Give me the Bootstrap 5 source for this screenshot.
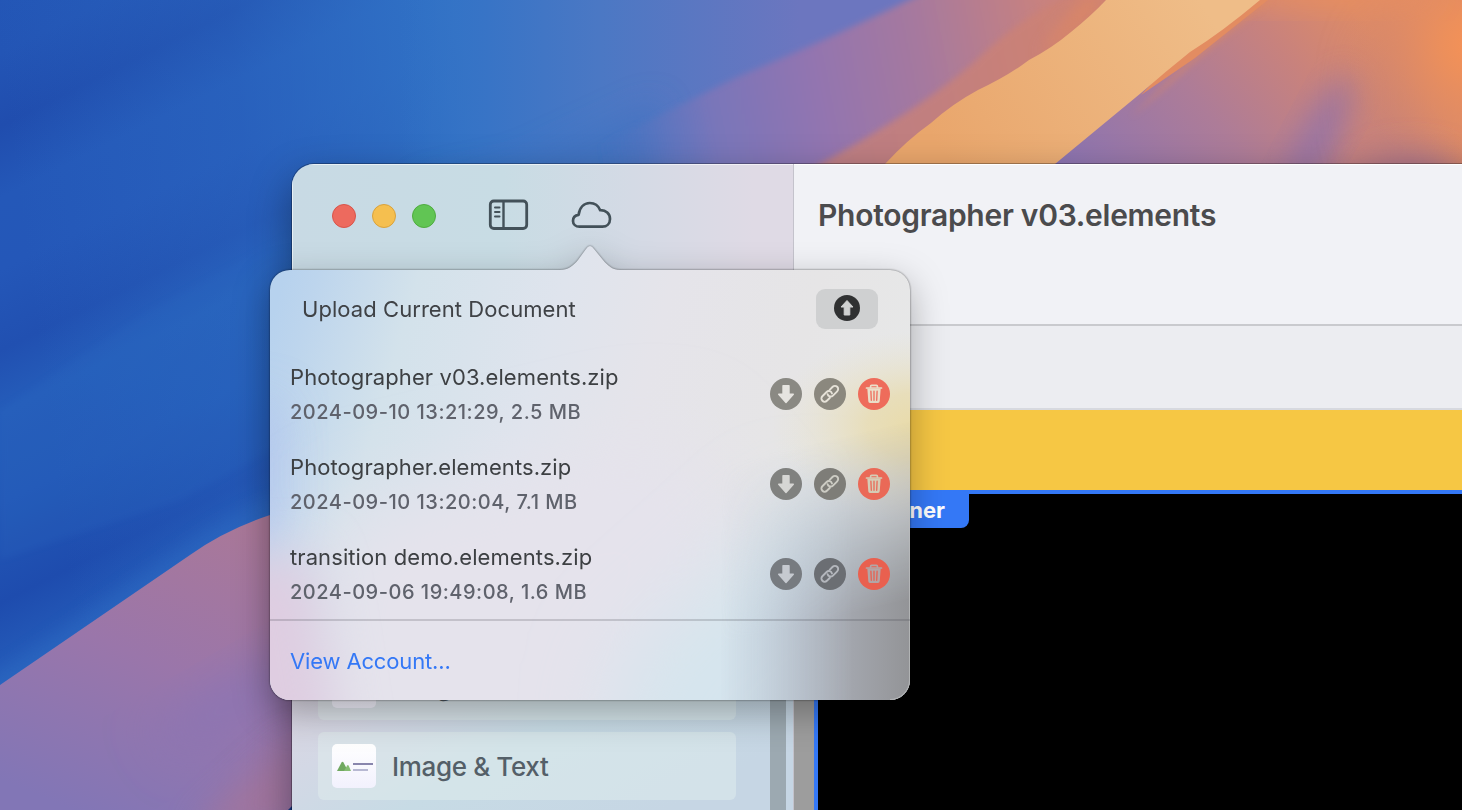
<!DOCTYPE html>
<html lang="en">
<head>
<meta charset="utf-8">
<title>Elements Cloud</title>
<link href="https://cdn.jsdelivr.net/npm/bootstrap@5.3.0/dist/css/bootstrap.min.css" rel="stylesheet">
<style>
  body { font-family: Inter, "Liberation Sans", sans-serif; background: #2a61bc; }
  .desktop { width: 1462px; height: 810px; padding: 164px 0 0 292px; }
  .wallpaper { inset: 0; }
  .app-window { width: 1250px; height: 720px; border-radius: 22px 0 0 0; box-shadow: 0 0 0 1px rgba(0,0,0,.28), 0 16px 42px rgba(0,0,0,.4); overflow: hidden; }
  .sidebar { width: 502px; background: linear-gradient(90deg, #c8dae4 0, #c8dce4 42%, #d4dae5 68%, #dfdae5 92%); border-right: 1px solid #c4c3cc; box-shadow: inset 1px 1px 0 rgba(255,255,255,.6); }
  .toolbar-left { height: 106px; padding: 36px 0 0 39.5px; }
  .light-dot { width: 24px; height: 24px; border-radius: 50%; }
  .dot-r { background: #ed6a5e; border: 1px solid #d8544a; }
  .dot-y { background: #f5bf4f; border: 1px solid #d9a23c; }
  .dot-g { background: #61c554; border: 1px solid #4fac3f; }
  .sb-icon { margin-left: 52px; margin-top: -1px; }
  .cloud-icon { margin-left: 41px; margin-top: 1px; }
  .side-body { height: 614px; padding-top: 382px; background: linear-gradient(150deg, #dfd4e0 0, #dfd4e0 42%, #d3d8e5 56%, #c7dbe5 67%, #c6d6e4 84%); }
  .comp-list { width: 418px; margin-left: 26px; gap: 12px; }
  .comp-item { height: 68px; border-radius: 6px; background: rgba(225,238,238,.48); padding-left: 14px; gap: 16px; font-size: 26px; color: #545f68; letter-spacing: -.35px; font-weight: 500; }
  .comp-thumb { width: 44px; height: 44px; border-radius: 5px; background: linear-gradient(#fff, #f2f1fd); }
  .track { width: 16px; margin-right: 7px; background: #9ca9b1; }
  .doc-head { height: 160px; background: #f1f2f6; padding: 29px 0 0 24px; box-shadow: inset 0 1px 0 #fff; }
  .doc-title { font-size: 30px; font-weight: 600; color: #4b4b4d; line-height: 44px; letter-spacing: -.28px; }
  .doc-bar { height: 86px; background: #ecedf1; border-top: 2px solid #c9cace; border-bottom: 2px solid #d7d9df; }
  .doc-yellow { height: 80px; background: #f6c744; }
  .doc-body { background: #9d9d9d; padding-left: 20px; }
  .sel-wrap { margin-left: -20px; border-top: 4px solid #3478f6; padding-left: 20px; }
  .sel-inner { border-left: 4px solid #3478f6; background: #000; height: 400px; }
  .tag-name { height: 34px; width: 151px; background: #3478f6; color: #fff; font-weight: 700; font-size: 22px; border-bottom-right-radius: 8px; padding-right: 24px; line-height: 33px; }
  .pop { left: 270px; top: 244px; width: 640px; height: 456px; filter: drop-shadow(0 0 1px rgba(0,0,0,.55)) drop-shadow(0 12px 18px rgba(0,0,0,.3)); }
  .pop-art { inset: 0; }
  .pop-content { padding-top: 26px; }
  .upload-row { height: 78px; padding: 0 32px; color: #3f4246; font-size: 22px; letter-spacing: .06px; }
  .upload-btn { width: 62px; height: 40px; border-radius: 9px; background: #cfd0d1; }
  .files { padding: 0 20px; }
  .file-row { height: 90px; padding-top: 14px; }
  .file-name { font-size: 22px; line-height: 30px; color: #3d4043; letter-spacing: .09px; }
  .file-meta { font-size: 20px; line-height: 28px; margin-top: 6px; color: #5f626c; font-weight: 500; letter-spacing: .51px; }
  .actions { gap: 12px; padding-top: 16px; }
  .account { height: 81px; margin-top: 1px; border-top: 2px solid rgba(60,60,70,.2); padding: 2px 20px 0; }
  .account a { color: #3478f6; font-size: 22px; letter-spacing: -.15px; }
</style>
</head>
<body class="overflow-hidden m-0">
<main class="desktop position-relative overflow-hidden">
  <svg class="wallpaper position-absolute" width="1462" height="810" viewBox="0 0 1462 810" aria-hidden="true">
    <defs>
      <linearGradient id="gBlue" x1="0" y1="0" x2="360" y2="720" gradientUnits="userSpaceOnUse">
        <stop offset="0" stop-color="#2356b6"/><stop offset=".06" stop-color="#2355b5"/><stop offset=".14" stop-color="#204dae"/><stop offset=".22" stop-color="#2458b8"/><stop offset=".3" stop-color="#2457b8"/><stop offset=".39" stop-color="#2150b1"/><stop offset=".46" stop-color="#255dba"/><stop offset=".56" stop-color="#2358b7"/><stop offset=".67" stop-color="#1e4cae"/><stop offset=".74" stop-color="#245ab8"/><stop offset=".8" stop-color="#2a68c0"/><stop offset="1" stop-color="#2a68c0"/>
      </linearGradient>
      <linearGradient id="gLift" x1="0" y1="60" x2="460" y2="0" gradientUnits="userSpaceOnUse"><stop offset="0" stop-color="#3376c8" stop-opacity="0"/><stop offset=".5" stop-color="#3376c8" stop-opacity=".3"/><stop offset="1" stop-color="#3376c8" stop-opacity=".9"/></linearGradient>
      <linearGradient id="gBand" x1="1200" y1="0" x2="950" y2="164" gradientUnits="userSpaceOnUse"><stop offset="0" stop-color="#efbd88"/><stop offset="1" stop-color="#e9a66c"/></linearGradient>
      <linearGradient id="gRose" x1="250" y1="520" x2="120" y2="830" gradientUnits="userSpaceOnUse"><stop offset="0" stop-color="#aa7898"/><stop offset=".5" stop-color="#9a76aa"/><stop offset="1" stop-color="#8276b6"/></linearGradient>
      <linearGradient id="gPurple" x1="590" y1="110" x2="1050" y2="20" gradientUnits="userSpaceOnUse"><stop offset="0" stop-color="#4a73c2" stop-opacity="0"/><stop offset=".25" stop-color="#7876ba"/><stop offset=".48" stop-color="#9275b0"/><stop offset=".72" stop-color="#a6799e"/><stop offset="1" stop-color="#c9827e"/></linearGradient>
      <linearGradient id="gTop" x1="400" y1="0" x2="800" y2="0" gradientUnits="userSpaceOnUse"><stop offset="0" stop-color="#3273c6" stop-opacity="0"/><stop offset=".22" stop-color="#3874c6"/><stop offset=".5" stop-color="#4b78c4"/><stop offset="1" stop-color="#6c76bf"/></linearGradient>
      <linearGradient id="gRight" x1="1080" y1="190" x2="1330" y2="-20" gradientUnits="userSpaceOnUse"><stop offset="0" stop-color="#8b74b2"/><stop offset=".45" stop-color="#ad7c98"/><stop offset=".75" stop-color="#c8827d"/><stop offset="1" stop-color="#de8b66"/></linearGradient>
      <radialGradient id="gGlow" cx="1475" cy="45" r="130" gradientUnits="userSpaceOnUse"><stop offset="0" stop-color="#f69256"/><stop offset=".25" stop-color="#ee905a" stop-opacity=".9"/><stop offset="1" stop-color="#dc8a68" stop-opacity="0"/></radialGradient>
      <filter id="b3" x="-20%" y="-20%" width="140%" height="140%"><feGaussianBlur stdDeviation="3"/></filter>
      <filter id="b8" x="-30%" y="-30%" width="160%" height="160%"><feGaussianBlur stdDeviation="8"/></filter>
      <filter id="b16" x="-70%" y="-70%" width="240%" height="240%"><feGaussianBlur stdDeviation="16"/></filter>
      <filter id="b25" x="-70%" y="-70%" width="240%" height="240%"><feGaussianBlur stdDeviation="25"/></filter>
      <filter id="b45" x="-80%" y="-80%" width="260%" height="260%"><feGaussianBlur stdDeviation="42"/></filter>
      <clipPath id="rightClip"><path d="M1260 0H1462V170H1050L1150 83Q1208 42 1260 0Z"/></clipPath>
      <clipPath id="roseClip"><path d="M0 685L190 555Q225 530 270 515H330V810H0Z"/></clipPath>
    </defs>
    <rect width="1462" height="810" fill="url(#gBlue)"/>
    <rect width="900" height="810" fill="url(#gLift)"/>
    <path d="M0 410L150 310L290 235V440L180 500L0 560Z" fill="#2b68c0" opacity=".22" filter="url(#b3)"/>
    <rect x="400" y="-10" width="720" height="200" fill="url(#gTop)"/>
    <path d="M400 190L520 165L660 100V190Z" fill="#3a6fc0" opacity=".5" filter="url(#b16)"/>
    <path d="M520 190L600 145L735 78Q840 35 950 -20H1180V190Z" fill="url(#gPurple)" filter="url(#b3)"/>
    <path d="M800 175Q930 105 985 52Q1025 15 1070 -5H1130L1060 85L880 175Z" fill="#cd8273" opacity=".72" filter="url(#b3)"/>
    <path d="M1108 -4Q1080 36 1040 56Q1060 26 1085 -4Z" fill="#de8763" opacity=".8" filter="url(#b8)"/>
    <path d="M1220 0H1462V170H1030L1120 83Z" fill="url(#gRight)"/>
    <g clip-path="url(#rightClip)">
      <ellipse cx="1320" cy="135" rx="16" ry="66" transform="rotate(28 1320 135)" fill="#866fb2" opacity=".8" filter="url(#b16)"/>
      <ellipse cx="1400" cy="100" rx="35" ry="80" fill="#c07f7d" opacity=".6" filter="url(#b25)"/>
      <rect x="1330" y="-90" width="140" height="270" fill="url(#gGlow)"/>
      <ellipse cx="1320" cy="-8" rx="110" ry="12" fill="#e98f5f" filter="url(#b16)"/>
      <ellipse cx="1410" cy="180" rx="50" ry="26" fill="#a77389" filter="url(#b16)"/>
    </g>
    <path d="M1250 0H1272Q1225 36 1190 66Q1160 94 1130 118Z" fill="#df895f" filter="url(#b3)" opacity=".5"/>
    <path d="M1258 0H1268Q1225 34 1195 58L1141 95L1180 52Z" fill="#e38c61"/>
    <path d="M1106 0H1260Q1222 32 1190 52Q1165 72 1141 93L1055 164H885Q907 140 931 123Q952 104 978 90Q1008 76 1029 60Q1052 48 1071 32Q1092 15 1106 0Z" fill="url(#gBand)"/>
    <path d="M-10 690L190 553Q225 528 270 511H340V560L0 800Z" fill="#2f6cc3" opacity=".45" transform="translate(0 -12)" filter="url(#b8)"/>
    <path d="M0 685L190 555Q225 530 270 515H330V810H0Z" fill="url(#gRose)"/>
    <g clip-path="url(#roseClip)">
      <ellipse cx="230" cy="705" rx="80" ry="22" transform="rotate(-30 230 705)" fill="#8a75b4" filter="url(#b25)"/>
      <path d="M190 830L300 730V830Z" fill="#a57499" opacity=".8" filter="url(#b16)"/>
      <path d="M288 810L292 806V810Z" fill="#173a8c"/>
    </g>
  </svg>

  <section class="app-window position-relative d-flex">
    <aside class="sidebar flex-shrink-0">
      <header class="toolbar-left d-flex align-items-start">
        <div class="d-flex gap-3 mt-1">
          <span class="light-dot dot-r"></span><span class="light-dot dot-y"></span><span class="light-dot dot-g"></span>
        </div>
        <svg class="sb-icon" width="42" height="32" viewBox="0 0 42 32" fill="none" stroke="#435159">
          <rect x="2.300" y="2" width="36.400" height="27.500" rx="3.5" stroke-width="2.800"/>
          <path d="M15.5 2V29" stroke-width="2.4"/>
          <path d="M7 8.500H11.500M7 13H11.500M7 17.500H11.500" stroke-width="2" stroke-linecap="round"/>
        </svg>
        <svg class="cloud-icon" width="42" height="30" viewBox="0 0 42 30" fill="none" stroke="#435159" stroke-width="2.700" stroke-linejoin="round">
          <path d="M8.500 25.700C4.700 25.700 2 23.200 2 19.900C2 16.500 4.200 14.200 7.600 13.800C8.600 6.500 13 2 18.800 2C23.800 2 27.400 4.700 29.200 9.200C34.900 9 39 12.700 39 17.900C39 22.500 35.900 25.700 31.300 25.700Z"/>
        </svg>
      </header>
      <div class="side-body d-flex justify-content-between">
        <div class="comp-list d-flex flex-column">
          <div class="comp-item d-flex align-items-center flex-shrink-0"><span class="comp-thumb"></span><span>Image</span></div>
          <div class="comp-item d-flex align-items-center flex-shrink-0">
            <span class="comp-thumb"><svg class="d-block" width="44" height="44" viewBox="0 0 44 44"><path d="M5 27L9.500 18.500Q10.500 16.800 11.500 18.500L16 27Z" fill="#70a860"/><path d="M12 27L15.200 21.500Q16 20.500 16.800 22L19 27Z" fill="#86bd73"/><path d="M21 20H41" stroke="#8986ad" stroke-width="2"/><path d="M21 26H36" stroke="#b7b8d2" stroke-width="2"/></svg></span>
            <span>Image &amp; Text</span>
          </div>
        </div>
        <div class="track"></div>
      </div>
    </aside>
    <div class="flex-grow-1 d-flex flex-column">
      <header class="doc-head flex-shrink-0"><div class="doc-title">Photographer v03.elements</div></header>
      <div class="doc-bar flex-shrink-0"></div>
      <div class="doc-yellow flex-shrink-0"></div>
      <div class="doc-body flex-grow-1">
        <div class="sel-wrap"><div class="sel-inner"><div class="tag-name text-end">Container</div></div></div>
      </div>
    </div>
  </section>

  <section class="pop position-absolute">
    <svg class="pop-art position-absolute" width="640" height="456" viewBox="0 0 640 456" aria-hidden="true">
      <defs>
        <clipPath id="popClip"><path d="M20 26H290C298 26 303 22 308 16L316 5Q320 -1 324 5L333 16C338 22 343 26 350 26H620A20 20 0 0 1 640 46V436A20 20 0 0 1 620 456H20A20 20 0 0 1 0 436V46A20 20 0 0 1 20 26Z"/></clipPath>
        <linearGradient id="pBase" x1="0" y1="80" x2="620" y2="260" gradientUnits="userSpaceOnUse"><stop offset="0" stop-color="#b7d2ee"/><stop offset=".05" stop-color="#bdd5ed"/><stop offset=".2" stop-color="#d3e2eb"/><stop offset=".42" stop-color="#dfe4ed"/><stop offset=".58" stop-color="#e5e4ea"/><stop offset=".8" stop-color="#e6e5e6"/><stop offset="1" stop-color="#e7e8e8"/></linearGradient>
        <radialGradient id="pYellow" gradientTransform="translate(650 182) scale(150 95)" cx="0" cy="0" r="1" gradientUnits="userSpaceOnUse"><stop offset="0" stop-color="#e9dba8"/><stop offset=".35" stop-color="#e8dcb2" stop-opacity=".85"/><stop offset="1" stop-color="#e8e4d0" stop-opacity="0"/></radialGradient>
        <linearGradient id="pDark" x1="450" y1="0" x2="640" y2="0" gradientUnits="userSpaceOnUse"><stop offset="0" stop-color="#b4bdcc" stop-opacity="0"/><stop offset=".2" stop-color="#b5bfcc" stop-opacity=".4"/><stop offset=".45" stop-color="#b0b7c2" stop-opacity=".85"/><stop offset=".7" stop-color="#a2a5ac"/><stop offset="1" stop-color="#939497"/></linearGradient>
        <linearGradient id="pFade" x1="560" y1="195" x2="600" y2="365" gradientUnits="userSpaceOnUse"><stop offset="0" stop-color="#fff" stop-opacity="0"/><stop offset=".5" stop-color="#fff" stop-opacity=".5"/><stop offset="1" stop-color="#fff"/></linearGradient>
        <mask id="pMask" maskUnits="userSpaceOnUse" x="0" y="0" width="640" height="456"><rect width="640" height="456" fill="url(#pFade)"/></mask>
      </defs>
      <g clip-path="url(#popClip)">
        <rect width="640" height="456" fill="url(#pBase)"/>
        <path d="M-60 160H10V300H-60Z" fill="#b0c2ee" opacity=".8" filter="url(#b25)"/>
        <path d="M60 270L400 190L480 280L400 560H20Z" fill="#e5e3ec" filter="url(#b45)"/>
        <path d="M-120 320L40 310L80 560H-120Z" fill="#dfcde1" filter="url(#b25)"/>
        <path d="M350 420L530 260L660 300V560H340Z" fill="#d5e5ee" filter="url(#b45)"/>
        <rect x="480" y="60" width="160" height="240" fill="url(#pYellow)"/>
        <rect x="440" y="150" width="200" height="306" fill="url(#pDark)" mask="url(#pMask)"/>
      </g>
      <path d="M639.500 270V436A19.500 19.500 0 0 1 620 455.500" fill="none" stroke="#b9babc" opacity=".8"/>
    </svg>
    <div class="pop-content position-relative">
      <div class="upload-row d-flex align-items-center justify-content-between">
        <span class="upload-text">Upload Current Document</span>
        <span class="upload-btn d-flex align-items-center justify-content-center">
          <svg width="28" height="28" viewBox="0 0 28 28"><circle cx="14" cy="13" r="13" fill="#303132"/><path d="M14 5.500L20 12H16.800V20H11.200V12H8Z" fill="#d0d1d1" stroke="#d0d1d1" stroke-linejoin="round"/></svg>
        </span>
      </div>
      <div class="files" id="files"></div>
      <footer class="account d-flex align-items-center"><a href="#" class="text-decoration-none">View Account...</a></footer>
    </div>
  </section>
</main>

<script src="https://cdn.jsdelivr.net/npm/bootstrap@5.3.0/dist/js/bootstrap.bundle.min.js"></script>
<script>
  const files = [
    ['Photographer v03.elements.zip', '2024-09-10 13:21:29, 2.5 MB', ['#8a8983', '#8b887e', '#ee6c5b'], ['#e6e4e0', '#e6e2d8', '#eadfc9']],
    ['Photographer.elements.zip', '2024-09-10 13:20:04, 7.1 MB', ['#80817f', '#7e7d78', '#ea6957'], ['#d6d6d4', '#cdccc4', '#d5ccb5']],
    ['transition demo.elements.zip', '2024-09-06 19:49:08, 1.6 MB', ['#777b80', '#6b6e73', '#e9604f'], ['#c6cad0', '#b4b7bd', '#b2a6a6']]
  ];
  const glyphs = [
    c => `<path d="M13 7.700H19V16.200H23.300L16 24.500L8.700 16.200H13Z" fill="${c}" stroke="${c}" stroke-width="1.400" stroke-linejoin="round"/>`,
    c => `<g transform="rotate(-45 16 16)" fill="none" stroke="${c}" stroke-width="1.900" stroke-linecap="round"><path d="M13.300 18.600H9A3.200 3.200 0 0 1 9 12.200H15A3.200 3.200 0 0 1 17.800 17"/><path d="M18.700 13.400H23A3.200 3.200 0 0 1 23 19.800H17A3.200 3.200 0 0 1 14.200 15" transform="translate(0 -.6)"/></g>`,
    (c, bg) => `<path d="M9.300 10.500H22.700L21.700 23.300Q21.600 25 20 25H12Q10.400 25 10.300 23.300Z" fill="${c}"/><path d="M8.500 10H23.500M12.600 10V8.300Q12.600 7.300 13.600 7.300H18.400Q19.400 7.300 19.400 8.300V10" fill="none" stroke="${c}" stroke-width="1.700" stroke-linecap="round"/><path d="M12.900 13.200L13.300 22.300M16 13.200V22.300M19.100 13.200L18.700 22.300" stroke="${bg}" stroke-width="1.300" stroke-linecap="round"/>`
  ];
  document.getElementById('files').innerHTML = files.map(([name, meta, cols, inks]) => `
    <div class="file-row d-flex justify-content-between">
      <div><div class="file-name">${name}</div><div class="file-meta">${meta}</div></div>
      <div class="actions d-flex align-items-start">${cols.map((bg, i) =>
        `<svg width="32" height="32" viewBox="0 0 32 32"><circle cx="16" cy="16" r="16" fill="${bg}"/>${glyphs[i](inks[i], bg)}</svg>`).join('')}</div>
    </div>`).join('');
</script>
</body>
</html>
